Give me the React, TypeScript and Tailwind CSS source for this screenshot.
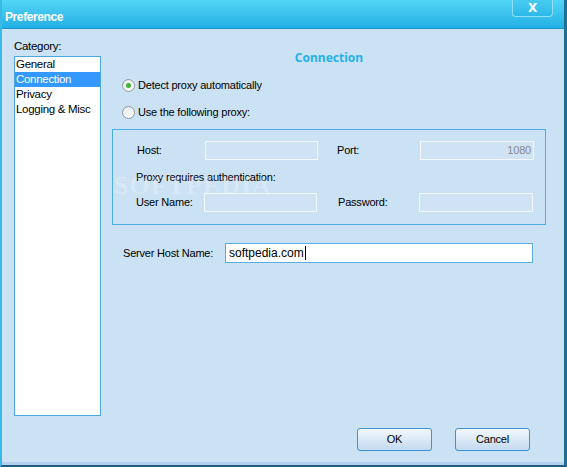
import React from 'react';

const categories = ['General', 'Connection', 'Privacy', 'Logging & Misc'];

function Radio({ checked, label }: { checked?: boolean; label: string }) {
    return (
        <div className="flex items-center h-[16px]">
            <span className="w-[13px] h-[13px] rounded-full border border-[#8f9aa6] bg-gradient-to-br from-[#e4e8ec] to-white flex items-center justify-center">
                {checked && <span className="w-[5px] h-[5px] rounded-full bg-[#3fb030]" />}
            </span>
            <span className="ml-[3px]">{label}</span>
        </div>
    );
}

function DisabledInput({ value, w }: { value?: string; w: string }) {
    return (
        <div className={`${w} h-[19px] border border-[#f2f8fd] bg-[#cfe3f5] text-right pr-[2px] text-[#8a8a8a] leading-[17px]`}>
            {value}
        </div>
    );
}

export default function App() {
    return (
        <div
            className="w-[567px] h-[467px] flex flex-col bg-[#2fb4e6] border-l-2 border-r-[3px] border-b-[2px] border-r-[#1e6f92] border-b-[#1e5f80] border-l-[#3ab9e8] text-[11px] tracking-[-0.2px] text-black"
            style={{ fontFamily: '"Liberation Sans", Arial, sans-serif' }}
        >
            {/* title bar */}
            <div className="relative h-[29px] shrink-0 bg-gradient-to-b from-[#52d4f6] to-[#20b0e4] border-b border-[#1d94c8]">
                <span className="absolute left-[3px] top-[8px] text-white font-bold text-[12px] tracking-[-0.4px]">
                    Preference
                </span>
                <div className="absolute left-[510px] top-0 w-[41px] h-[17px] rounded-b-[4px] border border-t-0 border-[#8fe0f8] bg-gradient-to-b from-[#47ccf2] to-[#2cb8ea] flex items-center justify-center">
                    <span className="text-white font-bold text-[12px] leading-none" style={{ fontFamily: '"DejaVu Sans", sans-serif' }}>
                        X
                    </span>
                </div>
            </div>

            {/* body */}
            <div className="relative flex-1 flex flex-col bg-[#cbe1f4] border-b-[3px] border-[#b3d1ee]">
                <div className="flex pt-[10px] pl-[12px]">
                    {/* category */}
                    <div className="w-[87px] flex flex-col text-[11.5px] tracking-[-0.3px]">
                        <div className="h-[17px] leading-[14px]">Category:</div>
                        <div className="h-[360px] bg-white border border-[#4ba6dc]">
                            {categories.map((c) => (
                                <div
                                    key={c}
                                    className={`h-[15px] leading-[15px] pl-[1px] whitespace-nowrap ${c === 'Connection' ? 'bg-[#3399ff] text-white' : ''}`}
                                >
                                    {c}
                                </div>
                            ))}
                        </div>
                    </div>

                    {/* connection panel */}
                    <div className="ml-[11px] w-[434px] flex flex-col">
                        <div
                            className="h-[16px] mt-[12px] text-center font-bold text-[12px] text-[#24b2ea] leading-[14px] tracking-normal"
                            style={{ fontFamily: '"Noto Sans", sans-serif' }}
                        >
                            Connection
                        </div>
                        <div className="ml-[10px] mt-[10px]">
                            <Radio checked label="Detect proxy automatically" />
                        </div>
                        <div className="ml-[10px] mt-[11px]">
                            <Radio label="Use the following proxy:" />
                        </div>

                        <div className="mt-[9px] h-[96px] border border-[#4bb0e2] pl-[24px] pt-[11px]">
                            <div className="flex items-center">
                                <span className="w-[68px]">Host:</span>
                                <DisabledInput w="w-[113px]" />
                                <span className="ml-[19px] w-[83px]">Port:</span>
                                <DisabledInput w="w-[114px]" value="1080" />
                            </div>
                            <div className="mt-[10px] h-[14px] leading-[14px] -ml-[1px]">Proxy requires authentication:</div>
                            <div className="flex items-center mt-[9px]">
                                <span className="w-[68px] -ml-[1px]">User Name:</span>
                                <DisabledInput w="w-[113px]" />
                                <span className="ml-[21px] w-[81px]">Password:</span>
                                <DisabledInput w="w-[114px]" />
                            </div>
                        </div>

                        <div className="flex items-center mt-[18px] pl-[11px]">
                            <span className="w-[102px]">Server Host Name:</span>
                            <div className="w-[308px] h-[20px] bg-white border border-[#5aaee0] pl-[3px] leading-[18px] text-[12px] tracking-normal flex items-center">
                                softpedia.com
                                <span className="ml-px w-px h-[14px] bg-black" />
                            </div>
                        </div>
                    </div>
                </div>

                {/* watermark */}
                <div
                    className="absolute left-[112px] top-[137px] text-[26px] font-bold tracking-[1px] text-white/25 pointer-events-none"
                    style={{ fontFamily: '"Liberation Serif", serif' }}
                >
                    SOFTPEDIA
                </div>

                <div className="flex justify-end gap-[23px] pr-[34px] mt-[12px]">
                    {['OK', 'Cancel'].map((b) => (
                        <button
                            key={b}
                            className="w-[75px] h-[23px] rounded-[3px] border border-[#3d92d6] bg-gradient-to-b from-[#f2f8fd] to-[#c3daf0] text-[11px]"
                        >
                            {b}
                        </button>
                    ))}
                </div>
            </div>
        </div>
    );
}
